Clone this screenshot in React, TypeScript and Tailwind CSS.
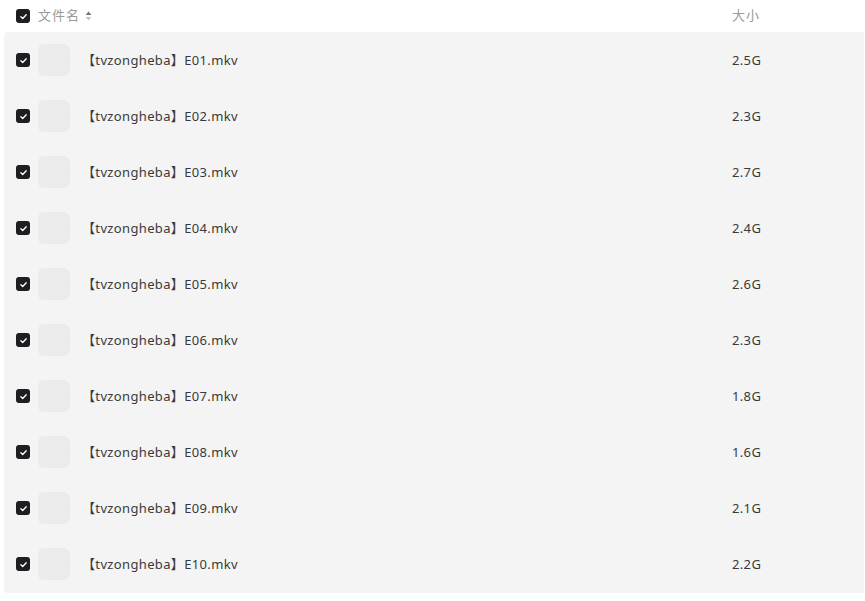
const FILES = [
  { name: "【tvzongheba】E01.mkv", size: "2.5G" },
  { name: "【tvzongheba】E02.mkv", size: "2.3G" },
  { name: "【tvzongheba】E03.mkv", size: "2.7G" },
  { name: "【tvzongheba】E04.mkv", size: "2.4G" },
  { name: "【tvzongheba】E05.mkv", size: "2.6G" },
  { name: "【tvzongheba】E06.mkv", size: "2.3G" },
  { name: "【tvzongheba】E07.mkv", size: "1.8G" },
  { name: "【tvzongheba】E08.mkv", size: "1.6G" },
  { name: "【tvzongheba】E09.mkv", size: "2.1G" },
  { name: "【tvzongheba】E10.mkv", size: "2.2G" },
];

function Checkbox() {
  return (
    <span className="flex h-[14px] w-[14px] shrink-0 items-center justify-center rounded-[3px] bg-[#1e1e22]">
      <svg viewBox="0 0 12 12" className="h-[9px] w-[9px]" fill="none">
        <path d="M2.5 6.2 L5 8.6 L9.6 3.6" stroke="#fff" strokeWidth="1.8" strokeLinecap="round" strokeLinejoin="round" />
      </svg>
    </span>
  );
}

function SortIcon() {
  return (
    <svg viewBox="0 0 8 12" className="ml-[5px] h-[10px] w-[7px]">
      <path d="M4 0.5 L7.5 4.8 L0.5 4.8 Z" fill="#777" />
      <path d="M4 11.5 L7.5 7.2 L0.5 7.2 Z" fill="#c4c4c4" />
    </svg>
  );
}

export default function App() {
  return (
    <div
      className="h-[601px] w-[865px] bg-white text-[13px] tracking-[0.35px]"
      style={{ fontFamily: '"Noto Sans", "Noto Sans CJK SC", sans-serif' }}
    >
      <div className="flex h-8 items-center pl-4">
        <Checkbox />
        <span className="ml-2 flex items-center tracking-[1px] text-[#9a9a9a]">
          文件名
          <SortIcon />
        </span>
        <span className="ml-auto w-[133px] tracking-[1px] text-[#9a9a9a]">大小</span>
      </div>
      <div className="ml-1 mr-[1px] rounded-l-[4px] bg-[#f4f4f4] pb-[1px]">
        {FILES.map((f) => (
          <div key={f.name} className="flex h-14 items-center pl-3">
            <Checkbox />
            <span className="ml-2 h-8 w-8 shrink-0 rounded-md bg-[#ebebeb]" />
            <span className="ml-3 flex-1 pt-[2px] text-[#3a3a3a]">{f.name}</span>
            <span className="w-[132px] pt-[2px] text-[#3a3a3a]">{f.size}</span>
          </div>
        ))}
      </div>
    </div>
  );
}
